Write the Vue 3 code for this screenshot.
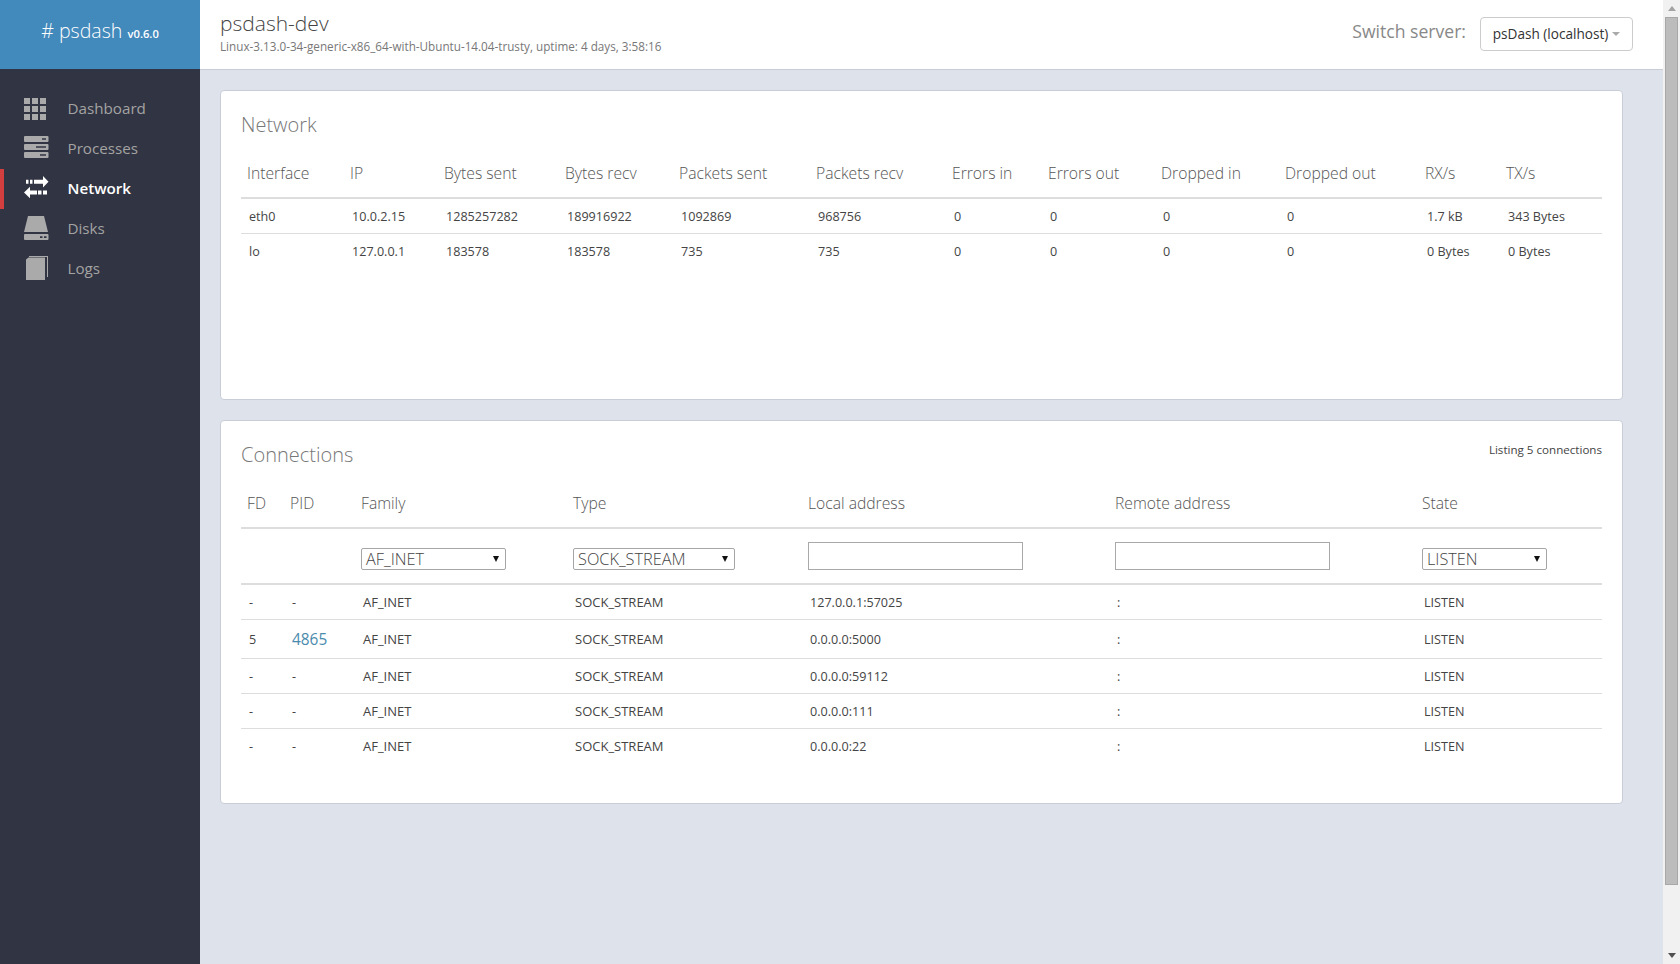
<script setup>
const nav = [
  { label: 'Dashboard', icon: 'grid' },
  { label: 'Processes', icon: 'server' },
  { label: 'Network', icon: 'swap', active: true },
  { label: 'Disks', icon: 'disk' },
  { label: 'Logs', icon: 'book' },
]
const gridCells = [0, 8, 16].flatMap((y) => [0, 8, 16].map((x) => ({ x, y })))
const netCols = [
  ['Interface', 103], ['IP', 94], ['Bytes sent', 121], ['Bytes recv', 114], ['Packets sent', 137], ['Packets recv', 136],
  ['Errors in', 96], ['Errors out', 113], ['Dropped in', 124], ['Dropped out', 140], ['RX/s', 81], ['TX/s', 102],
]
const netRows = [
  ['eth0', '10.0.2.15', '1285257282', '189916922', '1092869', '968756', '0', '0', '0', '0', '1.7 kB', '343 Bytes'],
  ['lo', '127.0.0.1', '183578', '183578', '735', '735', '0', '0', '0', '0', '0 Bytes', '0 Bytes'],
]
const connCols = [
  ['FD', 43], ['PID', 71], ['Family', 212], ['Type', 235], ['Local address', 307], ['Remote address', 307], ['State', 186],
]
const connRows = [
  ['-', '-', '127.0.0.1:57025'],
  ['5', '4865', '0.0.0.0:5000'],
  ['-', '-', '0.0.0.0:59112'],
  ['-', '-', '0.0.0.0:111'],
  ['-', '-', '0.0.0.0:22'],
]
</script>

<template>
  <div class="page">
    <aside class="sidebar">
      <div class="logo"># psdash <small>v0.6.0</small></div>
      <nav class="nav">
        <a v-for="item in nav" :key="item.label" class="nav-item" :class="{ active: item.active }">
          <svg class="icon" width="26" height="26" viewBox="0 0 26 26">
            <g v-if="item.icon === 'grid'">
              <rect v-for="c in gridCells" :key="c.x + '-' + c.y" :x="c.x + 1" :y="c.y + 2" width="6" height="6" />
            </g>
            <g v-else-if="item.icon === 'server'">
              <path fill-rule="evenodd" d="M2 0h22.500a1 1 0 0 1 1 1v4a1 1 0 0 1-1 1H2a1 1 0 0 1-1-1V1a1 1 0 0 1 1-1zm17 2.200v1.600h4V2.200z" />
              <path fill-rule="evenodd" d="M2 8h22.500a1 1 0 0 1 1 1v4a1 1 0 0 1-1 1H2a1 1 0 0 1-1-1V9a1 1 0 0 1 1-1zm11 2.200v1.600h10v-1.600z" />
              <path fill-rule="evenodd" d="M2 16h22.500a1 1 0 0 1 1 1v4a1 1 0 0 1-1 1H2a1 1 0 0 1-1-1v-4a1 1 0 0 1 1-1zm15 2.200v1.600h6v-1.600z" />
            </g>
            <g v-else-if="item.icon === 'swap'">
              <path d="M3 3.800h2.500v4H3zM7 3.800h2.500v4H7zM11 3.800h9V0l5.500 5.800-5.500 5.800V7.800h-9z" />
              <path d="M7 14.500V10.700L1 16.500l6 5.800v-3.800h7v-4zM15 14.500h3.500v4H15zM20 14.500h4v4h-4z" />
            </g>
            <g v-else-if="item.icon === 'disk'">
              <path d="M5 0h16l4 16H1z" />
              <path fill-rule="evenodd" d="M2 18h22.500a1 1 0 0 1 1 1v4a1 1 0 0 1-1 1H2a1 1 0 0 1-1-1v-4a1 1 0 0 1 1-1zm15 2.200v1.800h2.500v-1.800zm4 0v1.800h2.500v-1.800z" />
            </g>
            <g v-else>
              <path d="M3 3.500L5.500 1.500H22V24H3zM6 0h19v21h-1V1H6z" />
            </g>
          </svg>
          <span>{{ item.label }}</span>
        </a>
      </nav>
    </aside>

    <div class="main">
      <header class="topbar">
        <div class="server-info">
          <h1>psdash-dev</h1>
          <p>Linux-3.13.0-34-generic-x86_64-with-Ubuntu-14.04-trusty, uptime: 4 days, 3:58:16</p>
        </div>
        <div class="switcher">
          <span class="switch-label">Switch server:</span>
          <button class="server-btn" type="button">psDash (localhost)<i class="caret"></i></button>
        </div>
      </header>

      <main class="content">
        <section class="card network">
          <h3>Network</h3>
          <table>
            <colgroup><col v-for="c in netCols" :key="c[0]" :style="{ width: c[1] + 'px' }" /></colgroup>
            <thead><tr><th v-for="c in netCols" :key="c[0]">{{ c[0] }}</th></tr></thead>
            <tbody>
              <tr v-for="r in netRows" :key="r[0]"><td v-for="(v, i) in r" :key="i">{{ v }}</td></tr>
            </tbody>
          </table>
        </section>

        <section class="card connections">
          <div class="card-head">
            <h3>Connections</h3>
            <small class="listing">Listing 5 connections</small>
          </div>
          <table>
            <colgroup><col v-for="c in connCols" :key="c[0]" :style="{ width: c[1] + 'px' }" /></colgroup>
            <thead>
              <tr><th v-for="c in connCols" :key="c[0]">{{ c[0] }}</th></tr>
              <tr class="filters">
                <th></th>
                <th></th>
                <th><span class="sel family">AF_INET</span></th>
                <th><span class="sel type">SOCK_STREAM</span></th>
                <th><input class="addr" type="text" /></th>
                <th><input class="addr" type="text" /></th>
                <th><span class="sel state">LISTEN</span></th>
              </tr>
            </thead>
            <tbody>
              <tr v-for="(r, idx) in connRows" :key="idx" :class="{ tall: r[1] !== '-' }">
                <td>{{ r[0] }}</td>
                <td><a v-if="r[1] !== '-'" class="pid">{{ r[1] }}</a><template v-else>-</template></td>
                <td class="caps">AF_INET</td>
                <td class="caps">SOCK_STREAM</td>
                <td>{{ r[2] }}</td>
                <td>:</td>
                <td>LISTEN</td>
              </tr>
            </tbody>
          </table>
        </section>
      </main>
    </div>

    <div class="scrollbar">
      <i class="arrow up"></i>
      <div class="thumb-track"><div class="thumb"></div></div>
      <i class="arrow down"></i>
    </div>
  </div>
</template>

<style>
html, body { margin: 0; overflow: hidden; }
</style>

<style scoped>
* { box-sizing: border-box; }
.page {
  display: flex;
  height: 964px;
  overflow: hidden;
  background: #dee2eb;
  font-family: "Open Sans", "Noto Sans", sans-serif;
  color: #444;
}
.sidebar { width: 200px; flex: none; background: #313442; }
.logo {
  height: 69px;
  background: #4289bc;
  color: #fff;
  font-size: 19.6px;
  font-weight: 300;
  text-align: center;
  line-height: 61px;
  white-space: nowrap;
}
.logo small { font-size: 11.2px; font-weight: 600; }
.nav { padding-top: 20px; display: flex; flex-direction: column; }
.nav-item {
  height: 40px;
  display: flex;
  align-items: center;
  gap: 18.5px;
  padding-left: 23px;
  color: #a3a3a3;
  font-size: 15.2px;
  position: relative;
}
.nav-item span { margin-top: -2px; }
.nav-item .icon { fill: #aaa; flex: none; }
.nav-item.active { color: #fff; font-weight: 600; }
.nav-item.active .icon { fill: #fff; }
.nav-item.active::before {
  content: "";
  position: absolute;
  left: 0; top: 0; bottom: 0;
  width: 4px;
  background: #d33f3f;
}
.main { flex: 1; min-width: 0; display: flex; flex-direction: column; }
.topbar {
  height: 70px;
  flex: none;
  background: #fff;
  border-bottom: 1px solid #c8cdd8;
  padding: 0 30px 0 20px;
  display: flex;
  align-items: flex-start;
  justify-content: space-between;
}
.server-info h1 {
  margin: 8px 0 0;
  font-size: 21px;
  line-height: 30px;
  font-weight: 300;
  color: #444;
}
.server-info p {
  margin: 0;
  font-size: 11.7px;
  line-height: 16px;
  color: #777;
}
.switcher { display: flex; align-items: center; gap: 14px; padding-top: 17px; }
.switch-label { font-size: 17.6px; color: #888; margin-top: -6px; }
.server-btn {
  width: 153px;
  height: 34px;
  padding: 0 0 1px;
  background: #fff;
  border: 1px solid #ccc;
  border-radius: 4px;
  font: 400 13.6px "Open Sans", sans-serif;
  color: #333;
  display: flex;
  align-items: center;
  justify-content: center;
}
.caret {
  margin-left: 4px;
  border-left: 4px solid transparent;
  border-right: 4px solid transparent;
  border-top: 4px solid #aaa;
}
.content { padding: 20px 40px 0 20px; display: flex; flex-direction: column; gap: 20px; }
.card {
  background: #fff;
  border: 1px solid #c8cdd8;
  border-radius: 4px;
  padding: 20px;
}
.network { height: 310px; }
.connections { height: 384px; }
.card-head { display: flex; justify-content: space-between; align-items: flex-start; }
h3 {
  margin: 0 0 10px;
  font-size: 20px;
  line-height: 28px;
  font-weight: 300;
  color: #777;
}
.listing { font-size: 11.6px; font-weight: 500; line-height: 18px; color: #444; }
table { border-collapse: collapse; table-layout: fixed; width: 1361px; }
th {
  height: 49px;
  padding: 0 6px;
  text-align: left;
  font-size: 15.7px;
  font-weight: 300;
  color: #555;
  white-space: nowrap;
  border-bottom: 2px solid #ddd;
}
td {
  height: 35px;
  padding: 1px 8px 0;
  font-size: 12.6px;
  color: #444;
  border-bottom: 1px solid #ddd;
  white-space: nowrap;
}
td.caps { font-size: 13px; }
tr.tall td { height: 39px; }
tbody tr:last-child td { border-bottom: 0; }
.filters th { height: 56px; vertical-align: top; padding-top: 19px; }
.filters th:nth-child(5), .filters th:nth-child(6) { padding-top: 13px; }
.sel {
  display: block;
  position: relative;
  height: 22px;
  padding-left: 4px;
  border: 1px solid #a6a6a6;
  border-radius: 2px;
  font-size: 16.3px;
  line-height: 20px;
  font-weight: 300;
  color: #444;
}
.sel::after {
  content: "";
  position: absolute;
  right: 6px;
  top: 7px;
  border-left: 3.500px solid transparent;
  border-right: 3.500px solid transparent;
  border-top: 6px solid #111;
}
.family { width: 145px; }
.type { width: 162px; }
.state { width: 125px; }
.addr {
  display: block;
  width: 215px;
  height: 28px;
  border: 1px solid #a9a9a9;
  border-radius: 0;
  padding: 0;
  background: #fff;
}
.pid { font-size: 15.4px; color: #4a8bad; }
.scrollbar {
  width: 17px;
  flex: none;
  background: #f1f1f1;
  display: flex;
  flex-direction: column;
  align-items: center;
}
.arrow { flex: none; width: 0; height: 0; margin: 6px 0; border-left: 4px solid transparent; border-right: 4px solid transparent; }
.arrow.up { border-bottom: 5px solid #a3a3a3; }
.arrow.down { border-top: 5px solid #505050; }
.thumb-track { flex: 1; width: 100%; padding: 0 2px; }
.thumb { height: 868px; background: #bcbcbc; border: 1px solid #a8a8a8; }
</style>
